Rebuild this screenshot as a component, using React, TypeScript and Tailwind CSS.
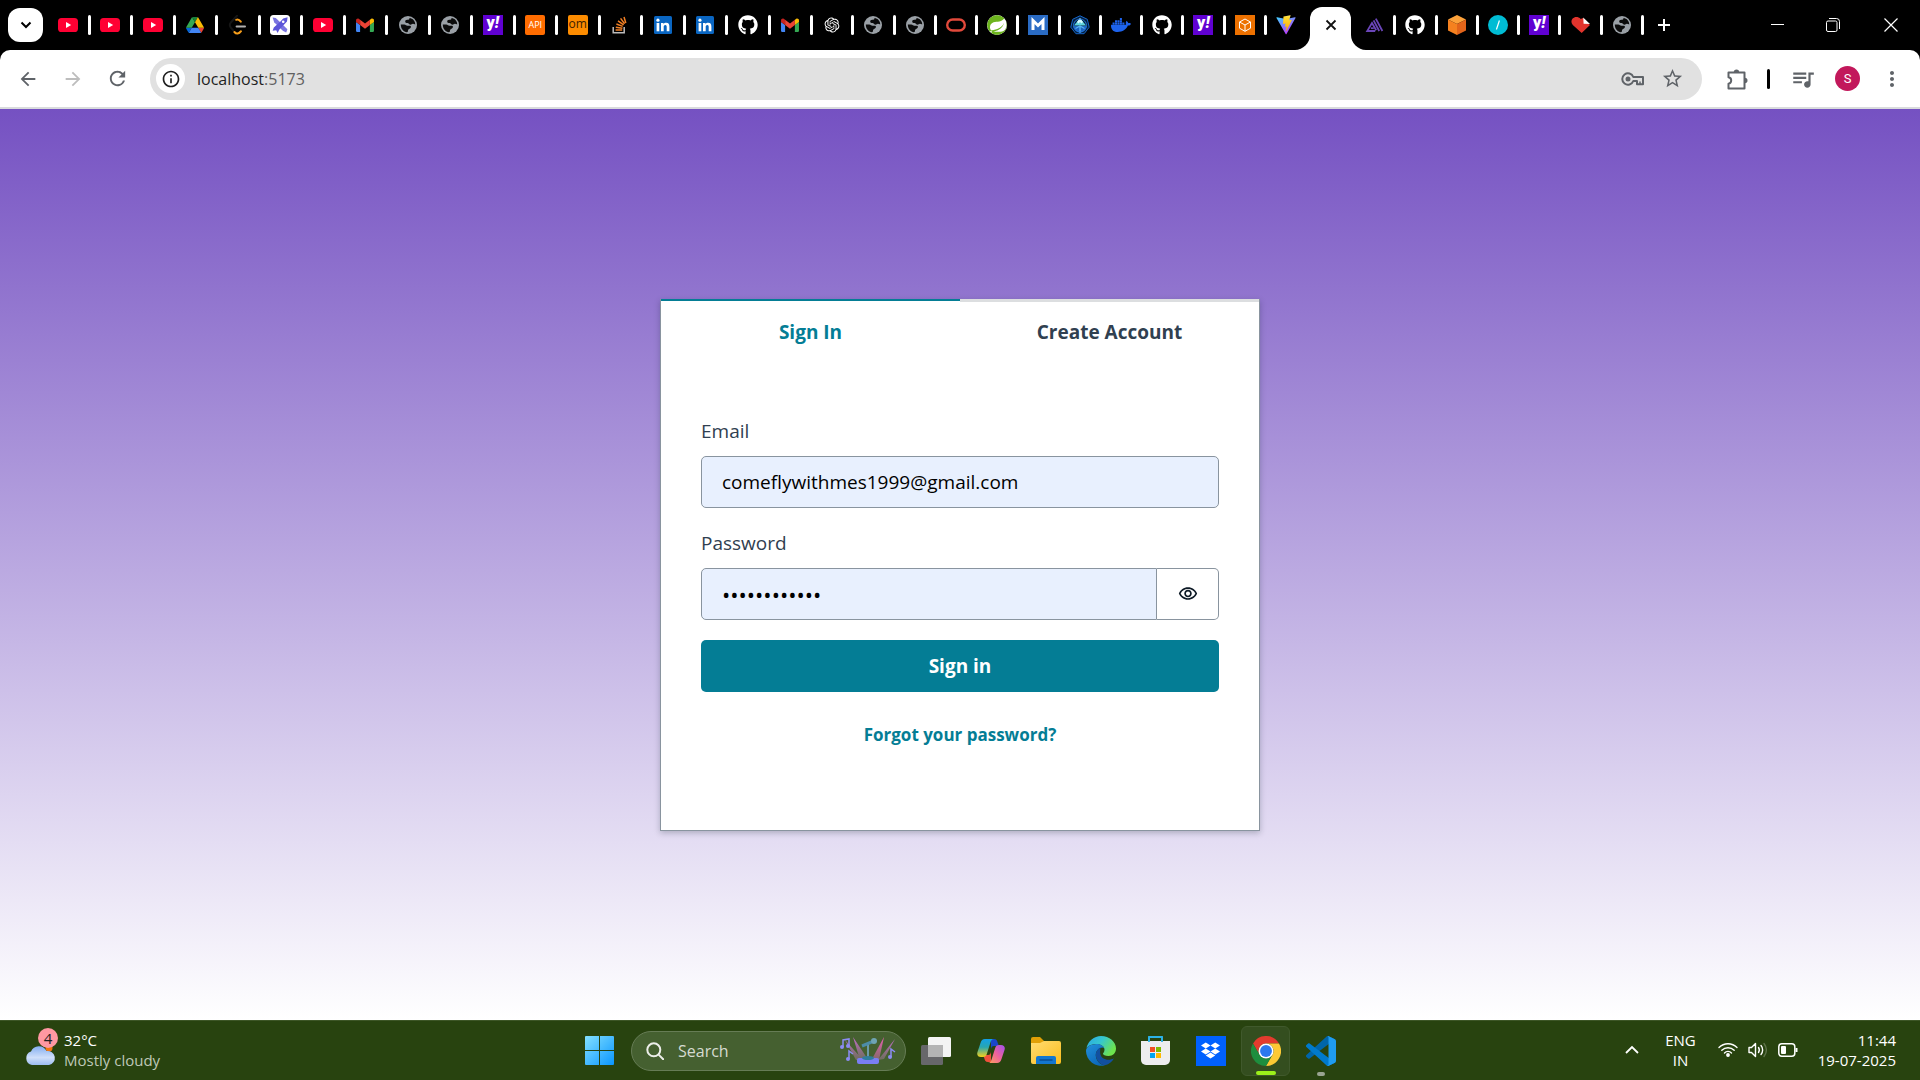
import React, { useState } from "react";
import { FaGithub, FaDocker, FaDropbox } from "react-icons/fa";
import { RiOpenaiFill } from "react-icons/ri";
import { SiSpring } from "react-icons/si";
import {
  MdArrowBack,
  MdArrowForward,
  MdRefresh,
  MdInfoOutline,
  MdStarOutline,
  MdQueueMusic,
  MdMoreVert,
  MdOutlineVisibility,
} from "react-icons/md";

const YouTube = () => (
  <svg viewBox="0 0 20 20" className="size-5">
    <rect y="3" width="20" height="14" rx="3.6" fill="#ff0033" />
    <path d="M8 7v6l5.2-3z" fill="#fff" />
  </svg>
);

const Drive = () => (
  <svg viewBox="0 0 87.3 78" className="h-4 w-[18px]">
    <path d="m6.6 66.85 3.85 6.65c.8 1.4 1.95 2.5 3.3 3.3l13.75-23.8h-27.5c0 1.55.4 3.1 1.2 4.5z" fill="#0066da" />
    <path d="m43.65 25-13.75-23.8c-1.35.8-2.5 1.9-3.3 3.3l-25.4 44a9.06 9.06 0 0 0-1.2 4.5h27.5z" fill="#34a853" />
    <path d="m73.55 76.8c1.35-.8 2.5-1.9 3.3-3.3l1.6-2.75 7.65-13.25c.8-1.4 1.2-2.95 1.2-4.5h-27.502l5.852 11.5z" fill="#ea4335" />
    <path d="m43.65 25 13.75-23.8c-1.35-.8-2.9-1.2-4.5-1.2h-18.5c-1.6 0-3.15.45-4.5 1.2z" fill="#188038" />
    <path d="m59.8 53h-32.3l-13.75 23.8c1.35.8 2.9 1.2 4.5 1.2h50.8c1.6 0 3.15-.45 4.5-1.2z" fill="#4285f4" />
    <path d="m73.4 26.5-12.7-22c-.8-1.4-1.95-2.5-3.3-3.3l-13.75 23.8 16.15 28h27.45c0-1.55-.4-3.1-1.2-4.5z" fill="#fbbc04" />
  </svg>
);

const LeetCode = () => (
  <svg viewBox="0 0 20 20" className="size-5" fill="none" strokeLinecap="round" strokeWidth="2">
    <path d="M9 .8 2.8 7.5Q.8 10 2.8 12.6l2.4 2.8" stroke="#161616" />
    <path d="M8.200 4.800c2-1 3.400.2 4.600 1.800" stroke="#f89f1b" />
    <path d="M6.400 17c2 2.400 4.600 2 6.600-.8" stroke="#f89f1b" />
    <path d="M8.600 11.500h8.400" stroke="#b3b1b0" />
  </svg>
);

const CrossTools = () => (
  <svg viewBox="0 0 20 20" className="size-5">
    <rect width="20" height="20" rx="3.5" fill="#fff" />
    <path d="M2.6 2.6 5.8 3l11.600 11.200-1.200 3.200-3.400-1.600L4.200 7.200z" fill="#7a74e0" />
    <path d="m17.600 2.200-.6 4.400-7.600 8-1.800 3.400-1.400-2.800-3.600.6 1.200-3.400 6.400-5.600 3-3.400z" fill="#5c55d8" />
    <circle cx="13.200" cy="6.800" r="1.300" fill="#fff" />
  </svg>
);

const Gmail = () => (
  <svg viewBox="0 49.4 512 399.42" className="h-3.5 w-[18px]">
    <path fill="#4285f4" d="M34.91 448.818h81.454V251L0 163.727V413.91c0 19.287 15.622 34.91 34.91 34.91z" />
    <path fill="#34a853" d="M395.636 448.818h81.455c19.287 0 34.909-15.622 34.909-34.909V163.727L395.636 251z" />
    <path fill="#fbbc04" d="M395.636 99.727V251L512 163.727v-46.545c0-43.142-49.25-67.782-83.782-41.891z" />
    <path fill="#ea4335" d="M116.364 251V99.727L256 204.455 395.636 99.727V251L256 355.727z" />
    <path fill="#c5221f" d="M0 117.182v46.545L116.364 251V99.727L83.782 75.29C49.25 49.4 0 74.04 0 117.18z" />
  </svg>
);

const Globe = () => (
  <svg viewBox="0 0 18 18" className="size-[18px]">
    <circle cx="9" cy="9" r="9" fill="#9aa0a6" />
    <path
      d="M1.800 8.400h3.400c1.600 0 2 1.300 3.300 1.300h2.300c1.500 0 1.500 1.700.4 2.600-1 .8-2.200.8-2.200 2.300 0 .9-.3 1.600-1 1.600C4.400 15.800 1.800 12.500 1.800 8.400zM10.500 1.900c0 1.500-.8 1.800-2.200 1.800-1.600 0-2.100.9-2.100 1.900 0 1.200 1 1.500 2.400 1.500 1.200 0 1.200 1.600 2.600 1.600 1.600 0 1.500-.9 2.700-.9.9 0 1.500.3 2.300.8.300-3.400-2.400-6.400-5.700-6.700z"
      fill="#0b0b0b"
    />
  </svg>
);

const Yahoo = () => (
  <span className="flex size-5 items-center justify-center bg-[#6001d2] pb-1 font-['Roboto',sans-serif] text-base leading-4 font-black text-white">
    y<i>!</i>
  </span>
);

const ApiTile = () => (
  <span className="flex size-5 items-center justify-center rounded-[2px] bg-[#ff6c00] text-[9px] text-white">API</span>
);

const OmTile = () => (
  <span className="flex size-5 items-center justify-center rounded-[2px] bg-[#fd8c00] pb-0.5 text-xs leading-4 text-[#3b2000]">om</span>
);

const LinkedIn = () => (
  <svg viewBox="0 0 18 18" className="size-[18px]">
    <rect width="18" height="18" rx="1.500" fill="#0a66c2" />
    <g fill="#fff">
      <rect x="2.600" y="7" width="2.700" height="8.300" />
      <circle cx="3.950" cy="4.200" r="1.600" />
      <path d="M7 7h2.500v1.200c.5-.9 1.500-1.400 2.700-1.400 2.500 0 3.200 1.600 3.200 3.900v4.600h-2.700v-4.200c0-1-.1-2.100-1.400-2.100s-1.600 1-1.600 2.100v4.200H7z" />
    </g>
  </svg>
);

const StackOverflow = () => (
  <svg viewBox="0 0 16 18" className="h-[18px] w-4" fill="none">
    <path d="M1.200 11v5.800h11V11" stroke="#bcbbbb" strokeWidth="1.500" />
    <path d="M3.600 14h6.600M3.800 11.200l6.600 1M4.400 8l6.300 2.400M6 4.800l5.600 4M8.600 2.400l4 5.400M12 1l1.800 6" stroke="#f48024" strokeWidth="1.500" />
  </svg>
);

const Oracle = () => (
  <svg viewBox="0 0 20 20" className="size-5" fill="none">
    <rect x="1.200" y="4.500" width="17.600" height="11" rx="5.500" stroke="#e2493b" strokeWidth="2.400" />
  </svg>
);

const Spring = () => (
  <span className="flex size-5 items-center justify-center overflow-hidden rounded-full bg-white">
    <SiSpring className="size-5 text-[#6db51e]" />
  </span>
);

const MTile = () => (
  <svg viewBox="0 0 20 20" className="size-5">
    <rect width="20" height="20" fill="#2a6bc4" />
    <path d="M5 15V5.500l5 5 5-5V15" fill="none" stroke="#fff" strokeWidth="3" />
  </svg>
);

const Wheel = () => (
  <svg viewBox="0 0 20 20" className="size-5" fill="none">
    <path d="m10 .8 7.300 3.500 1.900 7.900-5.100 6.500H5.900L.8 12.200l1.900-7.900z" fill="#04203f" stroke="#1766c8" />
    <path d="M4 10.500 10 3l6 7.500z" fill="#5fd3dc" />
    <path d="m7 7 3-4 3 4-1.500 1.500L10 7 8.500 8.500z" fill="#d8fbff" />
    <path d="M3.500 11a6.500 6.500 0 0 0 13 0z" fill="#1c62c0" />
    <path d="M10 10.500V18M5.500 13.500 10 11l4.500 2.500" stroke="#58b4f0" strokeWidth="1.300" />
    <circle cx="10" cy="10.500" r="6.500" stroke="#2374d8" />
  </svg>
);

const CubeTile = () => (
  <svg viewBox="0 0 20 20" className="size-5" fill="none">
    <rect width="20" height="20" fill="#ed7100" />
    <path d="m10 4 5.500 3v6.200L10 16.300l-5.500-3.100V7zM4.500 7l5.500 3 5.500-3M10 10v6.300" stroke="#fff" />
  </svg>
);

const Vite = () => (
  <svg viewBox="0 0 410 404" className="size-5">
    <defs>
      <linearGradient id="viteBody" x1="0" y1="0" x2=".6" y2="1">
        <stop stopColor="#41d1ff" />
        <stop offset="1" stopColor="#bd34fe" />
      </linearGradient>
      <linearGradient id="viteBolt" x1="0" y1="0" x2="0" y2="1">
        <stop stopColor="#ffea83" />
        <stop offset=".1" stopColor="#ffdd35" />
        <stop offset="1" stopColor="#ffa800" />
      </linearGradient>
    </defs>
    <path fill="url(#viteBody)" d="M399.641 59.5246L215.643 388.545C211.844 395.338 202.084 395.378 198.228 388.618L10.5817 59.5563C6.38087 52.1896 12.6802 43.2665 21.0281 44.7586L205.223 77.6824C206.398 77.8924 207.601 77.8904 208.776 77.6763L389.119 44.8058C397.439 43.2894 403.768 52.1434 399.641 59.5246Z" />
    <path fill="url(#viteBolt)" d="M292.965 1.5744L156.801 28.2552C154.563 28.6937 152.906 30.5903 152.771 32.8664L144.395 174.33C144.198 177.662 147.258 180.248 150.51 179.498L188.42 170.749C191.967 169.931 195.172 173.055 194.443 176.622L183.18 231.775C182.422 235.487 185.907 238.661 189.532 237.56L212.947 230.446C216.577 229.344 220.065 232.527 219.297 236.242L201.398 322.875C200.278 328.294 207.486 331.249 210.492 326.603L212.5 323.5L323.454 102.072C325.312 98.3645 322.108 94.137 318.036 94.9228L279.014 102.454C275.347 103.161 272.227 99.746 273.262 96.1583L298.731 7.86689C299.767 4.27314 296.636 0.855181 292.965 1.5744Z" />
  </svg>
);

const Amplify = () => (
  <svg viewBox="0 0 20 20" className="size-5" fill="none" stroke="#6a45b8" strokeWidth="1.800">
    <path d="M11.200 16H3.200l4.800-8 4.200 7.200" />
    <path d="M6.800 13.200h3" />
    <path d="M9.600 5.400 15.200 16M11.800 3.600 18.400 16" />
  </svg>
);

const OrangeCube = () => (
  <svg viewBox="0 0 20 20" className="size-5">
    <path d="m10 0 9 4.400-9 4.600-9-4.600z" fill="#fca13a" />
    <path d="m1 4.400 9 4.600v11l-9-4.400z" fill="#f5811f" />
    <path d="m19 4.400-9 4.600v11l9-4.400z" fill="#e2641a" />
  </svg>
);

const TealSlash = () => (
  <svg viewBox="0 0 20 20" className="size-5">
    <circle cx="10" cy="10" r="10" fill="#00bcd4" />
    <path d="m8.400 14.500 3-9" stroke="#fff" strokeWidth="1.200" />
  </svg>
);

const Heart = () => (
  <svg viewBox="0 0 20 20" className="size-5">
    <path d="M1.600 3.600C3.700 1.500 7 1.400 9.800 4L12 3l7 7-8.300 8L1.800 10C0 8 0 5.400 1.600 3.600z" fill="#e2342d" />
    <path d="M12.200 2.400 19 9l-6.400-.2z" fill="#fff" />
  </svg>
);

const GitHub = () => <FaGithub className="size-5 text-white" />;
const OpenAI = () => <RiOpenaiFill className="size-[18px] text-white" />;
const Docker = () => <FaDocker className="size-5 text-[#1d63ed]" />;

const Key = () => (
  <svg viewBox="0 0 24 14" className="h-3.5 w-6" fill="none" stroke="currentColor" strokeWidth="2">
    <path d="M12.300 5A5.700 5.700 0 1 0 12.300 9H16v3.200h6V5z" strokeLinejoin="round" />
    <path d="M19 12V9.500" strokeWidth="1.500" />
    <circle cx="7" cy="7" r="2.500" fill="currentColor" stroke="none" />
  </svg>
);

const Puzzle = () => (
  <svg viewBox="0 0 22 22" className="size-[22px]" fill="none" stroke="currentColor" strokeWidth="2" strokeLinejoin="round">
    <path d="M2.500 4.500h16v16h-16v-4.800c3.600-.6 3.600-5.800 0-6.400z" />
    <path d="M7.800 4.200a2.700 2.700 0 0 1 5.400 0zM18.800 9.800a2.700 2.700 0 0 1 0 5.400z" fill="currentColor" stroke="none" />
  </svg>
);

type Tab = { name: string; Icon: () => React.ReactElement };

const leftTabs: Tab[] = [
  { name: "YouTube", Icon: YouTube },
  { name: "YouTube", Icon: YouTube },
  { name: "YouTube", Icon: YouTube },
  { name: "Drive", Icon: Drive },
  { name: "LeetCode", Icon: LeetCode },
  { name: "Tools", Icon: CrossTools },
  { name: "YouTube", Icon: YouTube },
  { name: "Gmail", Icon: Gmail },
  { name: "New page", Icon: Globe },
  { name: "New page", Icon: Globe },
  { name: "Yahoo", Icon: Yahoo },
  { name: "API", Icon: ApiTile },
  { name: "om", Icon: OmTile },
  { name: "Stack Overflow", Icon: StackOverflow },
  { name: "LinkedIn", Icon: LinkedIn },
  { name: "LinkedIn", Icon: LinkedIn },
  { name: "GitHub", Icon: GitHub },
  { name: "Gmail", Icon: Gmail },
];

const middleTabs: Tab[] = [
  { name: "ChatGPT", Icon: OpenAI },
  { name: "New page", Icon: Globe },
  { name: "New page", Icon: Globe },
  { name: "Oracle", Icon: Oracle },
  { name: "Spring", Icon: Spring },
  { name: "Maven", Icon: MTile },
  { name: "Helm", Icon: Wheel },
  { name: "Docker", Icon: Docker },
  { name: "GitHub", Icon: GitHub },
  { name: "Yahoo", Icon: Yahoo },
  { name: "Container", Icon: CubeTile },
  { name: "Vite", Icon: Vite },
];

const rightTabs: Tab[] = [
  { name: "Amplify", Icon: Amplify },
  { name: "GitHub", Icon: GitHub },
  { name: "AWS", Icon: OrangeCube },
  { name: "Console", Icon: TealSlash },
  { name: "Yahoo", Icon: Yahoo },
  { name: "Documents", Icon: Heart },
  { name: "New page", Icon: Globe },
];

function TabRun({ tabs, className, openEnd }: { tabs: Tab[]; className: string; openEnd?: boolean }) {
  return (
    <div className={className}>
      {tabs.map(({ name, Icon }, i) => (
        <div key={i} className="flex min-w-0 flex-1 items-center">
          <button aria-label={name} className="flex min-w-0 flex-1 justify-center">
            <Icon />
          </button>
          <span className={openEnd && i === tabs.length - 1 ? "w-[3px]" : "h-5 w-[3px] rounded-sm bg-white"} />
        </div>
      ))}
    </div>
  );
}

function TabStrip() {
  return (
    <div className="flex h-[50px] items-center bg-black">
      <button aria-label="Search tabs" className="ml-2 flex h-[34px] w-[35px] items-center justify-center rounded-xl bg-white">
        <svg viewBox="0 0 12 8" className="h-2 w-3" fill="none" stroke="#000" strokeWidth="2">
          <path d="m1.500 1.500 4.500 4.500 4.500-4.500" />
        </svg>
      </button>
      <TabRun tabs={leftTabs} className="ml-[5px] flex min-w-0 flex-[765_1_0]" />
      <TabRun tabs={middleTabs} className="flex min-w-0 flex-[495_1_0]" openEnd />
      <div className="relative flex h-full w-[47px] items-end pr-1 pl-0.5">
        <svg viewBox="0 0 15 15" className="absolute bottom-0 -left-[13px] size-[15px]" fill="#fff">
          <path d="M15 0v15H0C8 15 15 8 15 0z" />
        </svg>
        <button aria-label="Close tab" className="flex h-[43px] flex-1 items-center justify-center rounded-t-xl bg-white pb-[7px]">
          <svg viewBox="0 0 12 12" className="size-3" fill="none" stroke="#111" strokeWidth="1.800">
            <path d="m1.500 1.500 9 9m0-9-9 9" />
          </svg>
        </button>
        <svg viewBox="0 0 15 15" className="absolute -right-[11px] bottom-0 size-[15px]" fill="#fff">
          <path d="M0 0v15h15C7 15 0 8 0 0z" />
        </svg>
      </div>
      <TabRun tabs={rightTabs} className="flex min-w-0 flex-[289_1_0]" />
      <button aria-label="New tab" className="flex w-10 justify-center">
        <svg viewBox="0 0 14 14" className="size-3.5" stroke="#fff" strokeWidth="2">
          <path d="M7 1v12M1 7h12" />
        </svg>
      </button>
      <div className="ml-[65px] flex h-full">
        <button aria-label="Minimize" className="flex w-14 items-center justify-center">
          <svg viewBox="0 0 13 13" className="size-[13px]" stroke="#fff">
            <path d="M0 5.500h13" />
          </svg>
        </button>
        <button aria-label="Restore" className="flex w-14 items-center justify-center">
          <svg viewBox="0 0 14 14" className="size-3.5" stroke="#fff" fill="none">
            <rect x=".5" y="3" width="10.500" height="10.500" rx="1.500" />
            <path d="M3 .5h7.500a3 3 0 0 1 3 3V11" />
          </svg>
        </button>
        <button aria-label="Close window" className="flex w-[59px] items-center justify-center">
          <svg viewBox="0 0 14 14" className="size-3.5" stroke="#fff" strokeWidth="1.200">
            <path d="m.5.5 13 13m0-13-13 13" />
          </svg>
        </button>
      </div>
    </div>
  );
}

function Toolbar() {
  return (
    <div className="bg-black">
      <div className="flex h-[59px] items-center rounded-t-[10px] border-b-2 border-[#d9dbdd] bg-white text-[#5f6368]">
        <button aria-label="Back" className="ml-[5px] flex w-[45px] justify-center">
          <MdArrowBack className="size-[22px]" />
        </button>
        <button aria-label="Forward" className="flex w-[45px] justify-center text-[#bdbdbd]">
          <MdArrowForward className="size-[22px]" />
        </button>
        <button aria-label="Reload" className="flex w-[45px] justify-center">
          <MdRefresh className="size-[23px]" />
        </button>
        <div className="ml-2.5 flex h-[42px] min-w-0 flex-1 items-center rounded-full bg-[#e1e1e1] pr-[18px] pl-1.5">
          <button aria-label="Site information" className="flex size-[29px] items-center justify-center rounded-full bg-white text-[#1f1f1f]">
            <MdInfoOutline className="size-5" />
          </button>
          <div role="textbox" aria-label="Address" className="ml-3 flex-1 text-base text-[#606060]">
            <span className="text-[#1f1f1f]">localhost</span>:5173
          </div>
          <button aria-label="Passwords" className="mr-4">
            <Key />
          </button>
          <button aria-label="Bookmark">
            <MdStarOutline className="size-[23px]" />
          </button>
        </div>
        <button aria-label="Extensions" className="ml-6">
          <Puzzle />
        </button>
        <span className="ml-[19px] h-5 w-[3px] rounded-sm bg-black" />
        <button aria-label="Media" className="ml-5">
          <MdQueueMusic className="size-[26px]" />
        </button>
        <button aria-label="Profile" className="ml-[19px] flex size-[25px] items-center justify-center rounded-full bg-[#c2185b] font-['Roboto',sans-serif] text-[13px] text-white">
          S
        </button>
        <button aria-label="Menu" className="mr-4 ml-5">
          <MdMoreVert className="size-6" />
        </button>
      </div>
    </div>
  );
}

function SignInCard() {
  const [visible, setVisible] = useState(false);
  const field = "h-[52px] min-w-0 border border-[#89949f] bg-[#e8f0fe] px-5 text-black outline-none";
  return (
    <div className="flex w-[600px] flex-col border border-t-0 border-[#89949f] bg-white shadow-[0_2px_6px_rgba(13,26,38,0.25)]">
      <div role="tablist" className="grid h-[63px] grid-cols-2 text-[19px] leading-[30px] font-bold">
        <button role="tab" aria-selected="true" className="border-t-2 border-[#047d95] text-[#047d95]">
          Sign In
        </button>
        <button role="tab" aria-selected="false" className="border-t-[3px] border-[#dcdee0] text-[#304050]">
          Create Account
        </button>
      </div>
      <form className="flex flex-col px-10 pt-[54px]" onSubmit={(e) => e.preventDefault()}>
        <label htmlFor="email" className="mb-2.5 text-[19px] leading-[30px] text-[#304050]">
          Email
        </label>
        <input id="email" type="email" defaultValue="comeflywithmes1999@gmail.com" className={`${field} rounded-[5px] text-[19px]`} />
        <label htmlFor="password" className="mt-5 mb-2.5 text-[19px] leading-[30px] text-[#304050]">
          Password
        </label>
        <div className="flex">
          <input
            id="password"
            type={visible ? "text" : "password"}
            defaultValue="abcdefghijkl"
            className={`${field} flex-1 rounded-l-[5px] text-[22px]`}
          />
          <button
            type="button"
            aria-label="Show password"
            onClick={() => setVisible(!visible)}
            className="flex w-[62px] items-center justify-center rounded-r-[5px] border border-l-0 border-[#89949f] text-[#0d1a26]"
          >
            <MdOutlineVisibility className="size-5" />
          </button>
        </div>
        <button type="submit" className="mt-5 h-[52px] rounded-[5px] bg-[#047d95] text-[19px] font-bold text-white">
          Sign in
        </button>
      </form>
      <a href="#forgot" className="mt-[30px] mb-[82px] self-center text-[17px] leading-[26px] font-bold text-[#047d95]">
        Forgot your password?
      </a>
    </div>
  );
}

const Cloud = () => (
  <svg viewBox="0 0 32 22" className="h-[22px] w-8">
    <defs>
      <linearGradient id="cloud" x1="0" y1="0" x2="0" y2="1">
        <stop stopColor="#84aef0" />
        <stop offset=".6" stopColor="#cfdffa" />
        <stop offset="1" stopColor="#9dbdf0" />
      </linearGradient>
    </defs>
    <circle cx="25" cy="4" r="3.500" fill="#f2740d" />
    <path d="M8 21a7 7 0 0 1-1-13.500A8.500 8.500 0 0 1 22.500 7 7 7 0 0 1 25 21z" fill="url(#cloud)" />
  </svg>
);

const Windows = () => (
  <svg viewBox="0 0 29 29" className="size-[29px]">
    <defs>
      <linearGradient id="win" x1="0" y1="0" x2="1" y2="1">
        <stop stopColor="#83e0ff" />
        <stop offset="1" stopColor="#0a96ff" />
      </linearGradient>
    </defs>
    <path d="M1 0h13v14H0V1a1 1 0 0 1 1-1zM15 0h13a1 1 0 0 1 1 1v13H15zM0 15h14v14H1a1 1 0 0 1-1-1zM15 15h14v13a1 1 0 0 1-1 1H15z" fill="url(#win)" />
  </svg>
);

const Stage = () => (
  <svg viewBox="0 0 56 28" className="h-7 w-14">
    <defs>
      <linearGradient id="beam" x1="0" y1="0" x2="0" y2="1">
        <stop stopColor="#c66ad0" />
        <stop offset="1" stopColor="#9a7a8c" stopOpacity=".5" />
      </linearGradient>
      <linearGradient id="hot" x1="0" y1="0" x2="0" y2="1">
        <stop stopColor="#f25cb8" />
        <stop offset="1" stopColor="#b07090" stopOpacity=".6" />
      </linearGradient>
    </defs>
    <path d="M5 3 23 23h-7zM13 0l14 21-7 2z" fill="url(#beam)" />
    <path d="m44 0-5 23-7-1z" fill="url(#hot)" />
    <path d="M55 2 44 22l-6 1z" fill="url(#beam)" />
    <path d="M28 6v15" stroke="#6c9aa8" strokeWidth="2" />
    <path d="m22 9 12-5" stroke="#4c8ca8" strokeWidth="3" />
    <circle cx="34" cy="4" r="3" fill="#6fa4b4" />
    <rect x="17" y="21" width="22" height="6" rx="2" fill="#7a7ef4" />
    <ellipse cx="28" cy="21" rx="6" ry="2" fill="#2f7d9c" />
    <g fill="none" stroke="#8c8cf4" strokeWidth="1.500">
      <path d="M3 10V3l6-1v7M9 22v-8l4 3M51 20v-8l4 3" />
    </g>
    <g fill="#8c8cf4">
      <circle cx="2" cy="10" r="2" />
      <circle cx="8" cy="9" r="2" />
      <circle cx="8" cy="22" r="2" />
      <circle cx="50" cy="20" r="2" />
    </g>
  </svg>
);

const TaskView = () => (
  <svg viewBox="0 0 30 28" className="h-7 w-[30px]">
    <rect y="8" width="22" height="20" rx="1.500" fill="#67676a" />
    <rect x="7" width="23" height="20" rx="1.500" fill="#f4f4f4" />
    <path d="M7 8h15v12H8.500A1.500 1.500 0 0 1 7 18.500z" fill="#b4b4b4" />
  </svg>
);

const Copilot = () => (
  <svg viewBox="0 0 28 26" className="h-[26px] w-7">
    <defs>
      <linearGradient id="cpA" x1="0" y1="0" x2="0" y2="1">
        <stop stopColor="#12a0e8" />
        <stop offset=".45" stopColor="#28a6b0" />
        <stop offset="1" stopColor="#f6d218" />
      </linearGradient>
      <linearGradient id="cpB" x1="1" y1="0" x2="0" y2="1">
        <stop stopColor="#a050f0" />
        <stop offset=".5" stopColor="#f0629a" />
        <stop offset="1" stopColor="#fba45a" />
      </linearGradient>
    </defs>
    <path d="M14 1h3c2.500 0 3 1.500 3.600 3.500L22 8h-5c-2 0-2.500 1-3 3z" fill="#1b46c8" />
    <path d="M14 24h-3c-2.500 0-3-1.500-3.600-3.500L6 17h5c2 0 2.500-1 3-3z" fill="#f0503c" />
    <path d="M8 1h9c-2.500 0-3 2-3.700 4l-3.500 11c-.6 2-1.500 3-4 3H4c-3 0-4.500-2-3.500-5L3.500 5C4.300 2.400 5.500 1 8 1z" fill="url(#cpA)" />
    <path d="M20 25h-9c2.500 0 3-2 3.700-4l3.500-11c.6-2 1.500-3 4-3H24c3 0 4.500 2 3.500 5l-3 9c-.8 2.600-2 4-4.500 4z" fill="url(#cpB)" />
  </svg>
);

const Explorer = () => (
  <svg viewBox="0 0 30 27" className="h-[27px] w-[30px]">
    <defs>
      <linearGradient id="fold" x1="0" y1="0" x2="1" y2="1">
        <stop stopColor="#ffdc72" />
        <stop offset="1" stopColor="#fbbd1d" />
      </linearGradient>
    </defs>
    <path d="M0 2a2 2 0 0 1 2-2h7l4 4v4H0z" fill="#e0a007" />
    <path d="M13 4h15a2 2 0 0 1 2 2v19a2 2 0 0 1-2 2H2a2 2 0 0 1-2-2V6h9z" fill="url(#fold)" />
    <path d="M5 27v-6a2 2 0 0 1 2-2h16a2 2 0 0 1 2 2v6z" fill="#1377cf" />
    <path d="M8.500 23h13" stroke="#0a4c94" strokeWidth="1.500" />
  </svg>
);

const Edge = () => (
  <svg viewBox="0 0 30 30" className="size-[30px]">
    <defs>
      <linearGradient id="edTop" x1="0" y1="0" x2="1" y2=".5">
        <stop stopColor="#2aa6e6" />
        <stop offset=".5" stopColor="#35c7cf" />
        <stop offset="1" stopColor="#6ee34e" />
      </linearGradient>
      <linearGradient id="edLeft" x1="0" y1="0" x2=".6" y2="1">
        <stop stopColor="#2390dc" />
        <stop offset="1" stopColor="#0b68b8" />
      </linearGradient>
    </defs>
    <path d="M.5 12A15 15 0 0 1 15 0c8.500 0 15 6 15 12.500 0 4.500-3 7.500-7.500 7.500-3.500 0-5.500-1-5.500-2.200 0-1 1.500-1.300 1.500-4C18.500 10.500 15 8 10.500 8 6 8 2 10 .5 12z" fill="url(#edTop)" />
    <path d="M0 15c0-4 4.500-7 10.500-7 4 0 7 2 7.800 4.200C15 9.800 8.500 14.500 10 21c1 4.500 4.500 8 9 8.300A15 15 0 0 1 0 15z" fill="url(#edLeft)" />
    <path d="M14.500 11.500C11 13 9 17 10.200 21.500 11.600 26.500 16 29.300 19 29.200c4.200-1 7.600-4 9-7-5 3-13 1.600-13.800-5-.2-2.200.1-4 .3-5.700z" fill="#1250a0" />
  </svg>
);

const Store = () => (
  <svg viewBox="0 0 29 29" className="size-[29px]">
    <path d="M8 6V1h13v5" fill="none" stroke="#2cb2e6" strokeWidth="1.800" />
    <path d="M0 5h29v19a5 5 0 0 1-5 5H5a5 5 0 0 1-5-5z" fill="#ededee" />
    <path d="M8 1v5M21 1v5" stroke="#2cb2e6" strokeWidth="1.800" />
    <path d="M9 11h5v5H9z" fill="#f25022" />
    <path d="M15 11h5v5h-5z" fill="#7fba00" />
    <path d="M9 17h5v5H9z" fill="#00a4ef" />
    <path d="M15 17h5v5h-5z" fill="#ffb900" />
  </svg>
);

const Dropbox = () => (
  <span className="flex size-[30px] items-center justify-center bg-[#0061fe]">
    <FaDropbox className="size-[19px] text-white" />
  </span>
);

const Chrome = () => (
  <svg viewBox="0 0 48 48" className="size-[30px]">
    <path d="M3.200 12A24 24 0 0 1 44.800 12H24a12 12 0 0 0-10.400 18z" fill="#e33b2e" />
    <path d="M44.800 12A24 24 0 0 1 24 48l10.400-18A12 12 0 0 0 24 12z" fill="#fcc934" />
    <path d="M24 48A24 24 0 0 1 3.200 12l10.400 18a12 12 0 0 0 20.800 0z" fill="#1e8e3e" />
    <circle cx="24" cy="24" r="12" fill="#fff" />
    <circle cx="24" cy="24" r="9.500" fill="#2b78ee" />
  </svg>
);

const VSCode = () => (
  <svg viewBox="0 0 100 100" className="size-[30px]">
    <path fill="#0065a9" d="M96.4614 10.7962L75.8569 0.875542C73.4719 -0.272773 70.6217 0.211611 68.75 2.08333L1.29858 63.5833C-0.515693 65.2373 -0.513607 68.0937 1.30308 69.7452L6.81272 74.754C8.29793 76.1042 10.5347 76.2036 12.1338 74.9905L93.3609 13.3699C96.086 11.3026 100 13.2462 100 16.6667V16.4275C100 14.0265 98.6246 11.8378 96.4614 10.7962Z" />
    <path fill="#007acc" d="M96.4614 89.2038L75.8569 99.1245C73.4719 100.273 70.6217 99.7884 68.75 97.9167L1.29858 36.4167C-0.515693 34.7627 -0.513607 31.9063 1.30308 30.2548L6.81272 25.246C8.29793 23.8958 10.5347 23.7964 12.1338 25.0095L93.3609 86.6301C96.086 88.6974 100 86.7538 100 83.3333V83.5725C100 85.9735 98.6246 88.1622 96.4614 89.2038Z" />
    <path fill="#1f9cf0" d="M75.8578 99.1263C73.4721 100.274 70.6219 99.7885 68.75 97.9166C71.0564 100.223 75 98.5895 75 95.3278V4.67213C75 1.41039 71.0564 -0.223106 68.75 2.08329C70.6219 0.211402 73.4721 -0.273666 75.8578 0.873633L96.4587 10.7807C98.6234 11.8217 100 14.0112 100 16.4132V83.5871C100 85.9891 98.6234 88.1786 96.4586 89.2196L75.8578 99.1263Z" />
  </svg>
);

const pinned = [
  { name: "Task view", Icon: TaskView },
  { name: "Copilot", Icon: Copilot },
  { name: "File Explorer", Icon: Explorer },
  { name: "Edge", Icon: Edge },
  { name: "Microsoft Store", Icon: Store },
  { name: "Dropbox", Icon: Dropbox },
  { name: "Chrome", Icon: Chrome },
  { name: "VS Code", Icon: VSCode },
];

function Taskbar() {
  return (
    <footer className="grid h-[60px] grid-cols-[1fr_auto_1fr] items-center border-t border-[#3d5626] bg-[#28430f] text-[15px] text-white">
      <button className="ml-6 flex items-center gap-2 justify-self-start pb-0.5 text-left leading-5">
        <span className="relative pt-2.5">
          <Cloud />
          <span className="absolute -top-1.5 left-3.5 flex size-5 items-center justify-center rounded-full bg-[#ff98a2] text-[#222]">4</span>
        </span>
        <span>
          <span className="block">32°C</span>
          <span className="block text-[#bfc8b7]">Mostly cloudy</span>
        </span>
      </button>
      <div className="flex items-center">
        <button aria-label="Start" className="flex w-[55px] justify-center">
          <Windows />
        </button>
        <label className="mr-0.5 ml-1 flex h-10 w-[275px] items-center rounded-full border border-[#667c55] bg-[#456030] pr-[9px] pl-3.5">
          <svg viewBox="0 0 18 18" className="size-[18px] shrink-0" fill="none" stroke="#eceee9" strokeWidth="2">
            <circle cx="7.800" cy="7.800" r="6.500" />
            <path d="m12.600 12.600 4.600 4.600" strokeLinecap="round" />
          </svg>
          <input aria-label="Search" placeholder="Search" className="ml-3.5 min-w-0 flex-1 bg-transparent text-base outline-none placeholder:text-[#d5dbd0]" />
          <Stage />
        </label>
        {pinned.map(({ name, Icon }) => (
          <button
            key={name}
            aria-label={name}
            className={
              name === "Chrome"
                ? "relative mx-[3px] flex h-[50px] w-[49px] items-center justify-center rounded-md border border-[#40592c] bg-[#344e1f]"
                : "relative flex h-[50px] w-[55px] items-center justify-center"
            }
          >
            <Icon />
            {name === "Chrome" && <span className="absolute bottom-0 h-1 w-5 rounded-full bg-[#9cf01a]" />}
            {name === "VS Code" && <span className="absolute bottom-0 h-1 w-2 rounded-full bg-[#9aa492]" />}
          </button>
        ))}
      </div>
      <div className="mr-6 flex items-center justify-self-end pb-0.5 leading-5">
        <button aria-label="Hidden icons">
          <svg viewBox="0 0 14 9" className="h-[9px] w-3.5" fill="none" stroke="#fff" strokeWidth="1.800">
            <path d="m1 8 6-6 6 6" />
          </svg>
        </button>
        <button className="ml-[26px] text-center">
          <span className="block">ENG</span>
          <span className="block">IN</span>
        </button>
        <button aria-label="Network, volume and battery" className="ml-[22px] flex items-center gap-2.5">
          <svg viewBox="0 0 20 15" className="h-[15px] w-5" fill="none" stroke="#fff" strokeWidth="1.400" strokeLinecap="round">
            <path d="M1 5.500a12.700 12.700 0 0 1 18 0M3.800 8.300a8.800 8.800 0 0 1 12.400 0M6.500 11a5 5 0 0 1 7 0" />
            <circle cx="10" cy="13" r="1.200" fill="#fff" />
          </svg>
          <svg viewBox="0 0 20 16" className="h-4 w-5" fill="none" stroke="#fff" strokeWidth="1.400" strokeLinecap="round" strokeLinejoin="round">
            <path d="M1 5.500h2.500L7.500 1.500v13l-4-4H1z" />
            <path d="M10.500 5.500c1 1.500 1 3.500 0 5M13 3.500c2.200 2.500 2.200 6.500 0 9" />
            <path d="M16 1.500c3 4 3 9 0 13" stroke="#5d7249" />
          </svg>
          <svg viewBox="0 0 20 14" className="h-3.5 w-5" fill="none">
            <rect x=".8" y=".8" width="16" height="12.400" rx="3" stroke="#fff" strokeWidth="1.500" />
            <rect x="3" y="3" width="5" height="8" rx="1" fill="#fff" />
            <path d="M18.500 5v4" stroke="#fff" strokeWidth="2" />
          </svg>
        </button>
        <button className="ml-5 text-right">
          <span className="block">11:44</span>
          <span className="block">19-07-2025</span>
        </button>
      </div>
    </footer>
  );
}

export default function App() {
  return (
    <div className="flex min-h-screen flex-col font-['Open_Sans','Noto_Sans',sans-serif]">
      <header>
        <TabStrip />
        <Toolbar />
      </header>
      <main className="flex flex-1 items-center justify-center bg-[linear-gradient(180deg,#7551c2,#ffffff)] pt-px">
        <SignInCard />
      </main>
      <Taskbar />
    </div>
  );
}
